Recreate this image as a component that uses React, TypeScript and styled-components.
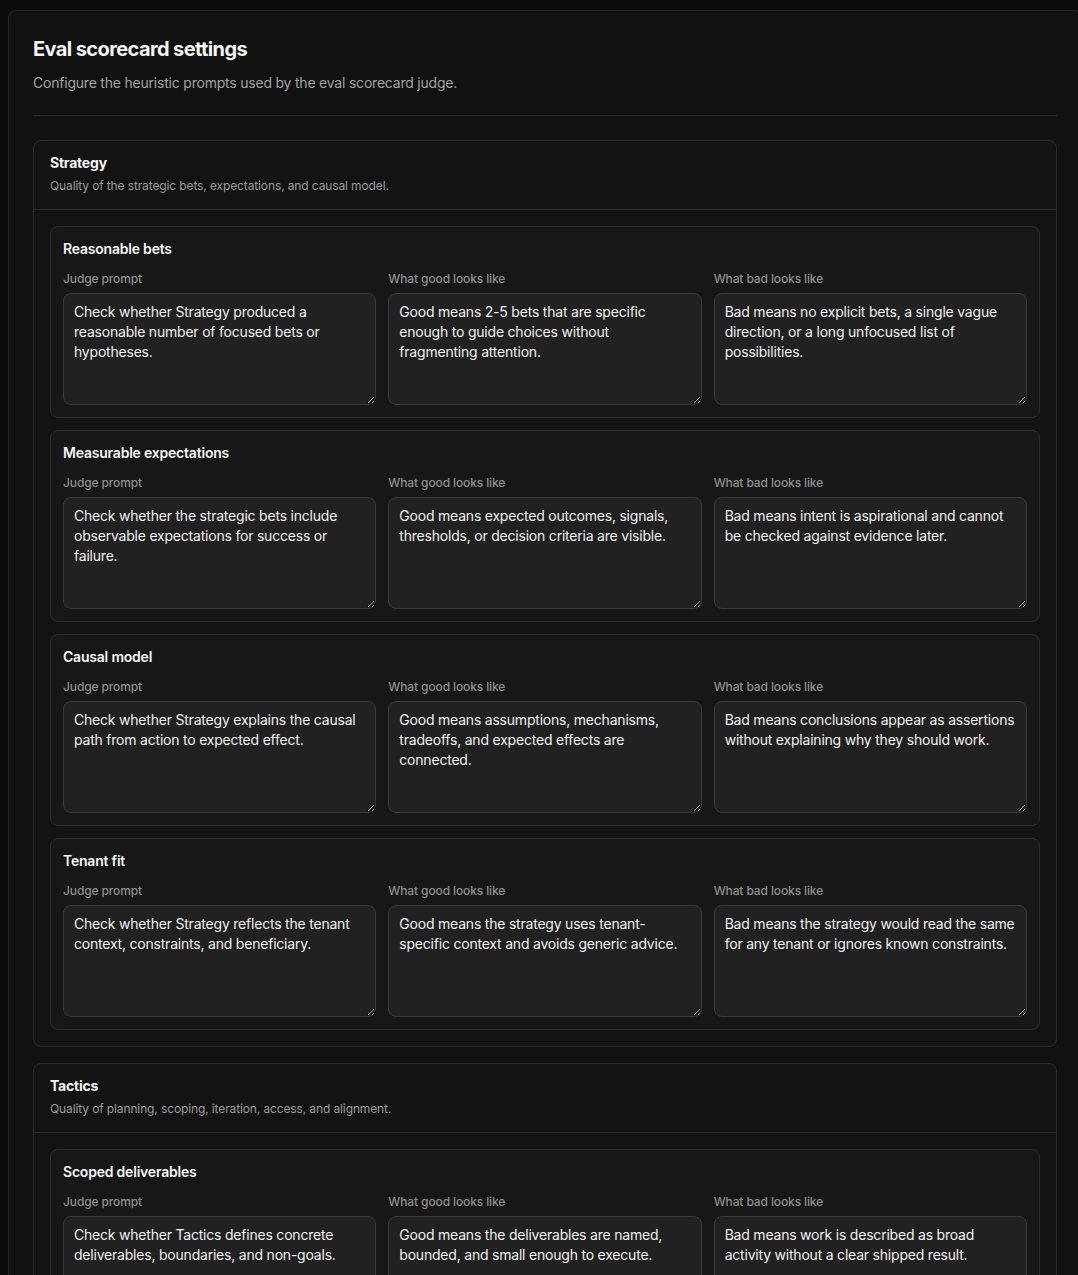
import React from "react";
import styled, { createGlobalStyle } from "styled-components";

const GlobalStyle = createGlobalStyle`
  html, body {
    margin: 0;
    padding: 0;
    background: #0b0b0b;
    color-scheme: dark;
    overflow-x: hidden;
    scrollbar-width: none;
  }
  html::-webkit-scrollbar, body::-webkit-scrollbar { display: none; }
  body {
    font-family: Inter, "Noto Sans", "DejaVu Sans", sans-serif;
    -webkit-font-smoothing: antialiased;
  }
  * { box-sizing: border-box; }
`;

const Page = styled.div`
  padding: 10px 0 40px 8px;
`;

const Panel = styled.main`
  width: 1074px;
  background: #111111;
  border: 1px solid #262626;
  border-radius: 8px;
  padding: 24px 24px 32px;
`;

const Title = styled.h1`
  margin: 0;
  font-size: 20px;
  line-height: 28px;
  font-weight: 700;
  color: #f5f5f5;
  letter-spacing: -0.03em;
`;

const Subtitle = styled.p`
  margin: 10px 0 0;
  font-size: 14px;
  line-height: 20px;
  color: #a3a3a3;
  letter-spacing: -0.015em;
`;

const Divider = styled.hr`
  margin: 22px 0 24px;
  border: 0;
  border-top: 1px solid #2a2a2a;
`;

const Sections = styled.div`
  display: flex;
  flex-direction: column;
  gap: 16px;
`;

const Section = styled.section`
  background: #131313;
  border: 1px solid #2b2b2b;
  border-radius: 8px;
`;

const SectionHeader = styled.header`
  padding: 13px 16px 15px;
  border-bottom: 1px solid #2b2b2b;
`;

const SectionTitle = styled.h2`
  margin: 0;
  font-size: 14px;
  line-height: 17px;
  font-weight: 700;
  color: #f5f5f5;
  letter-spacing: -0.015em;
`;

const SectionDesc = styled.p`
  margin: 7px 0 0;
  font-size: 12px;
  line-height: 16px;
  color: #9c9c9c;
  letter-spacing: -0.01em;
`;

const SectionBody = styled.div`
  padding: 16px;
  display: flex;
  flex-direction: column;
  gap: 12px;
`;

const Card = styled.div`
  background: #171717;
  border: 1px solid #2e2e2e;
  border-radius: 8px;
  padding: 12px;
`;

const CardTitle = styled.h3`
  margin: 0;
  font-size: 14px;
  line-height: 20px;
  font-weight: 600;
  color: #f5f5f5;
  letter-spacing: -0.015em;
`;

const Fields = styled.div`
  margin-top: 12px;
  display: grid;
  grid-template-columns: repeat(3, 1fr);
  gap: 12px;
`;

const Field = styled.label`
  display: flex;
  flex-direction: column;
  gap: 6px;
  min-width: 0;
`;

const FieldLabel = styled.span`
  font-size: 12px;
  line-height: 16px;
  font-weight: 500;
  color: #8f8f8f;
  letter-spacing: -0.01em;
`;

const TextArea = styled.textarea`
  display: block;
  width: 100%;
  height: 112px;
  resize: vertical;
  background: #212121;
  border: 1px solid #3a3a3a;
  border-radius: 8px;
  padding: 8px 10px;
  font-family: Inter, "Noto Sans", "DejaVu Sans", sans-serif;
  font-size: 14px;
  line-height: 20px;
  color: #f0f0f0;
  letter-spacing: -0.015em;
  outline: none;
`;

type Criterion = { name: string; judge: string; good: string; bad: string };
type SectionData = { title: string; desc: string; criteria: Criterion[] };

const sections: SectionData[] = [
  {
    title: "Strategy",
    desc: "Quality of the strategic bets, expectations, and causal model.",
    criteria: [
      {
        name: "Reasonable bets",
        judge:
          "Check whether Strategy produced a reasonable number of focused bets or hypotheses.",
        good:
          "Good means 2-5 bets that are specific enough to guide choices without fragmenting attention.",
        bad:
          "Bad means no explicit bets, a single vague direction, or a long unfocused list of possibilities.",
      },
      {
        name: "Measurable expectations",
        judge:
          "Check whether the strategic bets include observable expectations for success or failure.",
        good:
          "Good means expected outcomes, signals, thresholds, or decision criteria are visible.",
        bad:
          "Bad means intent is aspirational and cannot be checked against evidence later.",
      },
      {
        name: "Causal model",
        judge:
          "Check whether Strategy explains the causal path from action to expected effect.",
        good:
          "Good means assumptions, mechanisms, tradeoffs, and expected effects are connected.",
        bad:
          "Bad means conclusions appear as assertions without explaining why they should work.",
      },
      {
        name: "Tenant fit",
        judge:
          "Check whether Strategy reflects the tenant context, constraints, and beneficiary.",
        good:
          "Good means the strategy uses tenant-specific context and avoids generic advice.",
        bad:
          "Bad means the strategy would read the same for any tenant or ignores known constraints.",
      },
    ],
  },
  {
    title: "Tactics",
    desc: "Quality of planning, scoping, iteration, access, and alignment.",
    criteria: [
      {
        name: "Scoped deliverables",
        judge:
          "Check whether Tactics defines concrete deliverables, boundaries, and non-goals.",
        good:
          "Good means the deliverables are named, bounded, and small enough to execute.",
        bad:
          "Bad means work is described as broad activity without a clear shipped result.",
      },
      {
        name: "Iteration plan",
        judge:
          "Check whether Tactics sequences work into small iterations with feedback points.",
        good:
          "Good means each step produces something reviewable before the next begins.",
        bad:
          "Bad means a single big-bang delivery with no checkpoints or learning loops.",
      },
    ],
  },
];

const labels: { key: keyof Omit<Criterion, "name">; label: string }[] = [
  { key: "judge", label: "Judge prompt" },
  { key: "good", label: "What good looks like" },
  { key: "bad", label: "What bad looks like" },
];

export default function App() {
  return (
    <>
      <GlobalStyle />
      <Page>
        <Panel>
          <Title>Eval scorecard settings</Title>
          <Subtitle>
            Configure the heuristic prompts used by the eval scorecard judge.
          </Subtitle>
          <Divider />
          <Sections>
            {sections.map((s) => (
              <Section key={s.title}>
                <SectionHeader>
                  <SectionTitle>{s.title}</SectionTitle>
                  <SectionDesc>{s.desc}</SectionDesc>
                </SectionHeader>
                <SectionBody>
                  {s.criteria.map((c) => (
                    <Card key={c.name}>
                      <CardTitle>{c.name}</CardTitle>
                      <Fields>
                        {labels.map((l) => (
                          <Field key={l.key}>
                            <FieldLabel>{l.label}</FieldLabel>
                            <TextArea defaultValue={c[l.key]} />
                          </Field>
                        ))}
                      </Fields>
                    </Card>
                  ))}
                </SectionBody>
              </Section>
            ))}
          </Sections>
        </Panel>
      </Page>
    </>
  );
}
